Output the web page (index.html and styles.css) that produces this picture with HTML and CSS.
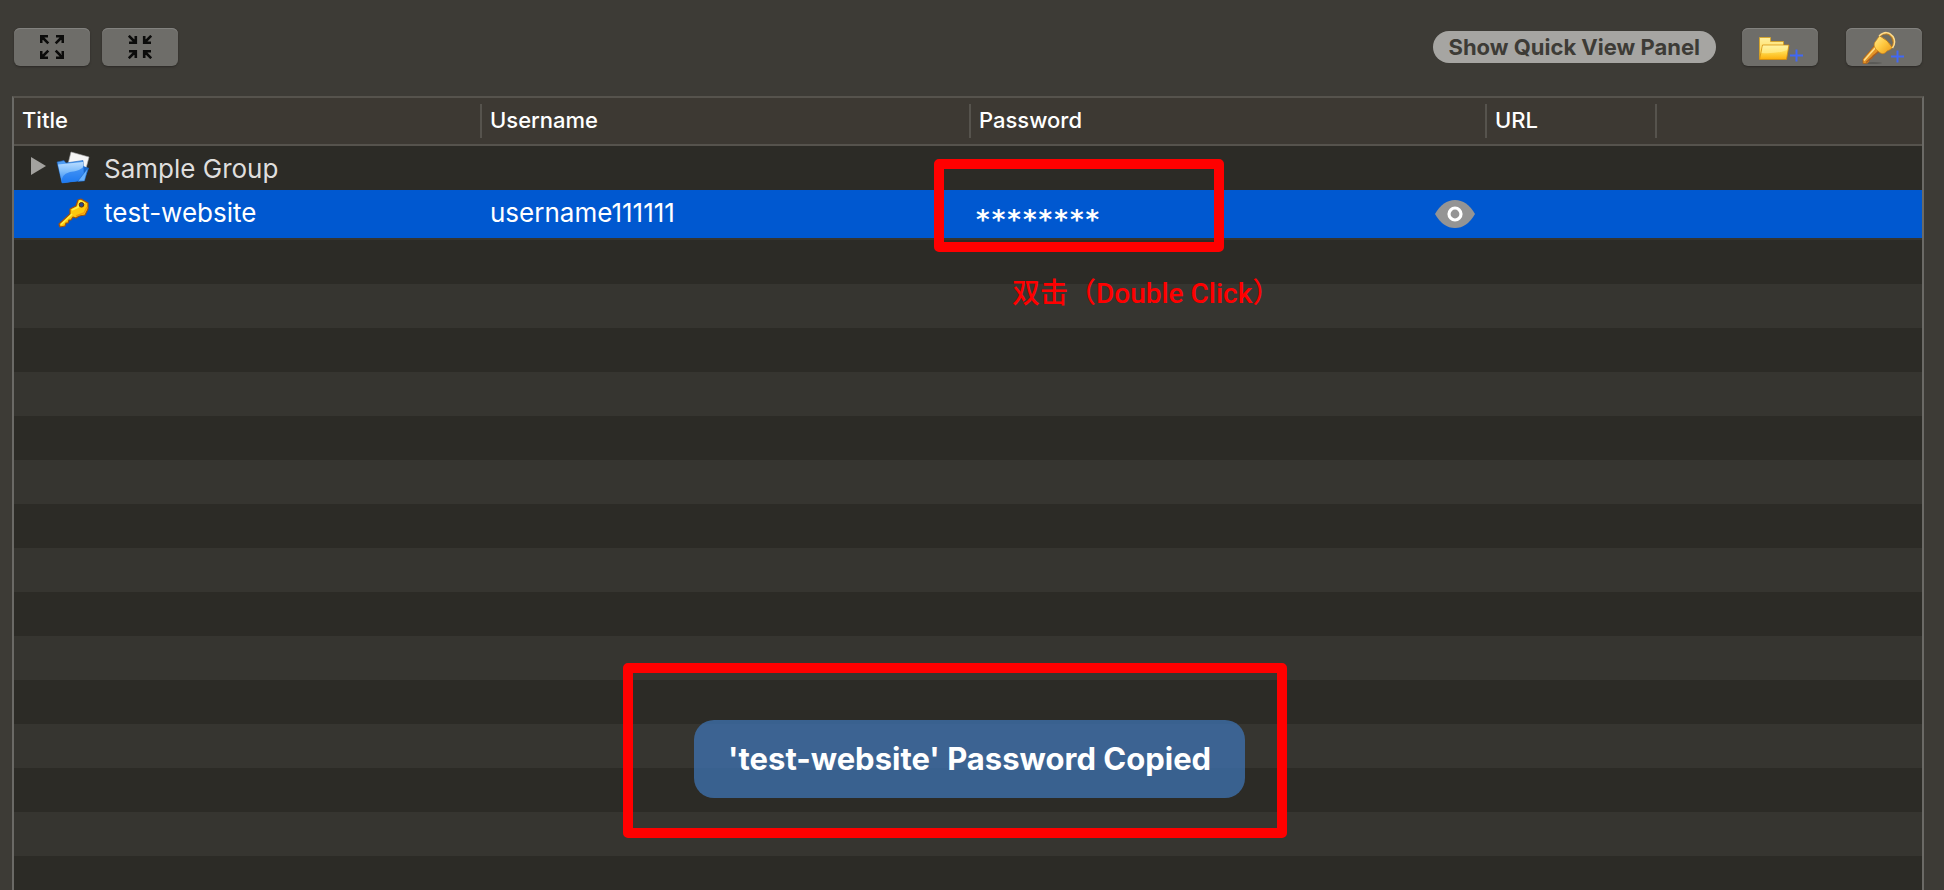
FILE: index.html
```html
<!DOCTYPE html>
<html lang="en">
<head>
<meta charset="utf-8">
<title>Password Database</title>
<link rel="stylesheet" href="styles.css">
</head>
<body>
<header class="toolbar">
  <button class="tool" type="button" aria-label="Expand all">
    <svg class="icon-arrows" viewBox="0 0 24 24" aria-hidden="true">
      <path d="M1.2 8V1.2H8M1.5 1.5L8.300 8.300M16 1.200H22.800V8M22.500 1.500L15.700 8.300M1.200 16V22.800H8M1.500 22.500L8.300 15.700M22.800 16V22.800H16M22.500 22.500L15.700 15.700"/>
    </svg>
  </button>
  <button class="tool" type="button" aria-label="Collapse all">
    <svg class="icon-arrows" viewBox="0 0 24 24" aria-hidden="true">
      <path d="M7.800 1V7.800H1M7.500 7.500L.8 .8M16.200 1V7.800H23M16.500 7.500L23.200 .8M1 16.200H7.800V23M7.500 16.500L.8 23.200M23 16.200H16.200V23M16.500 16.500L23.200 23.200"/>
    </svg>
  </button>
  <button class="pill" type="button">Show Quick View Panel</button>
  <button class="tool tool-group" type="button" aria-label="Add group">
    <svg class="icon-add" viewBox="0 0 76 38" aria-hidden="true">
      <defs>
        <linearGradient id="fy" x1="0" y1="0" x2="0" y2="1"><stop offset="0" stop-color="#fff0a0"/><stop offset="1" stop-color="#ffd23c"/></linearGradient>
        <linearGradient id="fz" x1="0" y1="0" x2="0" y2="1"><stop offset="0" stop-color="#fff29a"/><stop offset=".45" stop-color="#ffdc50"/><stop offset="1" stop-color="#fcae0a"/></linearGradient>
      </defs>
      <path d="M17.500 9.500H28.500V13.500H41.500V31H17.500Z" fill="url(#fy)" stroke="#dba21c" stroke-width=".8"/>
      <path d="M20.500 17H47L44.500 31.500H17.500Z" fill="url(#fz)" stroke="#d38d0c" stroke-width=".8"/>
      <path d="M20.800 17.800H46L45 22Q35 26 19.500 25Z" fill="#fff6b0" opacity=".5"/>
      <path d="M54.500 21.500V33.500M48 27.500H61" stroke="#4168f5" stroke-width="2"/>
    </svg>
  </button>
  <button class="tool" type="button" aria-label="Add entry">
    <svg class="icon-add" viewBox="0 0 76 38" aria-hidden="true">
      <defs><linearGradient id="kg" x1="0" y1="0" x2="1" y2="1"><stop offset="0" stop-color="#fff0a0"/><stop offset=".5" stop-color="#ffc940"/><stop offset="1" stop-color="#e69213"/></linearGradient></defs>
      <ellipse cx="27" cy="35" rx="9" ry=".8" fill="#3c3c39" opacity=".5"/>
      <path d="M29 17L17 31V35.500H21L23 33.500V31.500L26 30.500L27 27.500L30 26L36 21Z" fill="#e39427" stroke="#a9621a" stroke-width=".8"/>
      <path d="M30 19L18 32.500" stroke="#ffe08a" stroke-width="1.600"/>
      <path d="M34 22L20 34.500" stroke="#ab5e20" stroke-width="1.200"/>
      <path d="M29 14C32 11 33 6 39 5C45 5 48 10 48 15C48 20 44 22 41 23C38 27 35 26 32 23C29 21 27 17 29 14Z" fill="url(#kg)" stroke="#c98018" stroke-width=".7"/>
      <path d="M34 8Q42 3 46 10Q48.500 15 46 19Q42 12 34 8Z" fill="#6d6b61" stroke="#b87a22" stroke-width="1"/>
      <path d="M33 8Q41 1 47 8.500Q50.500 14.500 46.500 20" fill="none" stroke="#ffdc8c" stroke-width="1.500"/>
      <path d="M51.500 22.500V34.500M45 28.500H58" stroke="#4168f5" stroke-width="2"/>
    </svg>
  </button>
</header>

<main class="panel">
  <table class="entries">
    <colgroup><col class="col-title"><col class="col-user"><col class="col-pass"><col class="col-url"><col></colgroup>
    <thead>
      <tr>
        <th scope="col"><span class="head">Title</span></th>
        <th scope="col"><span class="head">Username</span></th>
        <th scope="col"><span class="head">Password</span></th>
        <th scope="col"><span class="head">URL</span></th>
        <td></td>
      </tr>
    </thead>
    <tbody>
      <tr class="group">
        <td>
          <div class="title">
            <button class="disclosure" type="button" aria-label="Expand Sample Group">
              <svg viewBox="0 0 16 20" aria-hidden="true"><path d="M1 1L16 10L1 19Z" fill="#a3a29f"/></svg>
            </button>
            <svg class="icon-row" viewBox="0 0 34 34" aria-hidden="true">
              <defs>
                <linearGradient id="fb" x1="0" y1="0" x2="0" y2="1"><stop offset="0" stop-color="#b9dcff"/><stop offset=".45" stop-color="#7dbcfb"/><stop offset="1" stop-color="#2c83f0"/></linearGradient>
              </defs>
              <path d="M15 1L33 6L28 25L10 21Z" fill="#f5f5f5" stroke="#aaa" stroke-width=".6"/>
              <path d="M24 14L33 17L28 30L22 31Z" fill="#1767c9"/>
              <path d="M1 11L8 9.500L10 12L27 9.500L28 29L6 32Z" fill="#4d9bf2" stroke="#1c62b8" stroke-width=".6"/>
              <path d="M2 13.500L27 11L28 29.500L6 32Z" fill="url(#fb)"/>
              <path d="M6 32Q4 24 14 21Q25 20 28 15V29.500Z" fill="#1673f0" opacity=".65"/>
              <path d="M22 30L32 17L28.500 30Z" fill="#69b3ff" stroke="#1c62b8" stroke-width=".5"/>
            </svg>
            <span>Sample Group</span>
          </div>
        </td>
        <td></td><td></td><td></td><td></td>
      </tr>
      <tr class="selected" aria-selected="true">
        <td>
          <div class="title">
            <span class="disclosure"></span>
            <svg class="icon-row" viewBox="0 0 34 34" aria-hidden="true">
              <path d="M14 12L20 9L22 3L25 2L32 6V12L29 18L23 19L20 21L17 20L15 23L13 23L12 26L10 26L9 29L4 30L3 27L14 17Z" fill="#ffc90d" stroke="#a2500c" stroke-width="1.200" stroke-linejoin="round"/>
              <path d="M16 13L22 10L24 4L29 6.500" fill="none" stroke="#fff04a" stroke-width="1.800"/>
              <path d="M5 27.500L16 17" stroke="#fff04a" stroke-width="1.600"/>
              <path d="M20 19L28 16L31 10" fill="none" stroke="#f39a0c" stroke-width="1.500"/>
              <circle cx="25.500" cy="7.800" r="2.300" fill="#274a8c" stroke="#5b2a10" stroke-width="1"/>
            </svg>
            <span class="entry-text">test-website</span>
          </div>
        </td>
        <td><div class="entry-text">username111111</div></td>
        <td class="secret">
          <div class="secret-row">
            <span class="stars">********</span>
            <button class="reveal" type="button" aria-label="Reveal password">
              <svg viewBox="0 0 40 28" aria-hidden="true"><path d="M0 14Q8 0 20 0T40 14Q32 28 20 28T0 14Z" fill="#949494"/><circle cx="20" cy="14" r="6" fill="none" stroke="#fff" stroke-width="3.200"/></svg>
            </button>
          </div>
          <div class="mark mark-password"></div>
          <div class="note" lang="zh-Hant">双击（Double Click）</div>
        </td>
        <td></td><td></td>
      </tr>
    </tbody>
  </table>
  <div class="mark mark-toast">
    <div class="toast" role="status">'test-website' Password Copied</div>
  </div>
</main>
</body>
</html>
```
FILE: styles.css
```css
* { box-sizing: border-box; }

body {
  margin: 0;
  min-height: 100vh;
  display: flex;
  flex-direction: column;
  background: #3d3b36;
  color: #dfdedd;
  font-family: Inter, "Noto Sans CJK SC", sans-serif;
  font-size: 26px;
}

button {
  margin: 0;
  padding: 0;
  border: 0;
  background: none;
  font: inherit;
  color: inherit;
}

svg { display: block; }

.toolbar {
  display: flex;
  align-items: center;
  gap: 12px;
  padding: 28px 22px 30px 14px;
}

.tool {
  width: 76px;
  height: 38px;
  display: grid;
  place-items: center;
  border-radius: 6px;
  background: #6e6d69;
  box-shadow: inset 0 1px #83827f, 0 1px 2px #2b2926;
}

.tool-group { margin: 0 16px 0 14px; }

.icon-arrows {
  width: 24px;
  height: 24px;
  fill: none;
  stroke: #0c0c0b;
  stroke-width: 2.6;
}

.icon-add { width: 76px; height: 38px; }

.pill {
  height: 32px;
  margin-left: auto;
  padding: 0 16px;
  border-radius: 16px;
  background: #a6a5a2;
  color: #3d3b36;
  font-size: 22px;
  font-weight: 700;
  line-height: 32px;
  white-space: nowrap;
}

.panel {
  position: relative;
  flex: 1;
  margin: 0 20px 0 12px;
  border: 2px solid #6b6a66;
  border-top-color: #56534d;
  border-bottom: 0;
  background: repeating-linear-gradient(#363530 0 44px, #2c2b26 44px 88px) 0 10px;
}

.entries {
  width: 100%;
  table-layout: fixed;
  border-collapse: separate;
  border-spacing: 0;
}

.col-title { width: 468px; }
.col-user { width: 489px; }
.col-pass { width: 516px; }
.col-url { width: 170px; }

.entries th,
.entries td {
  padding: 0 8px;
  text-align: left;
  vertical-align: middle;
  white-space: nowrap;
}

.entries thead th,
.entries thead td {
  height: 48px;
  background: #3d3933;
  border-bottom: 2px solid #56534d;
}

.entries thead th { padding-right: 0; }

.head {
  display: block;
  padding-bottom: 2px;
  border-right: 2px solid #56534d;
  color: #fff;
  font-size: 22px;
  font-weight: 500;
  line-height: 32px;
}

.group td { height: 44px; background: #2c2b26; }

.selected td {
  height: 48px;
  background: #0058d0;
  color: #fff;
}

.title {
  display: flex;
  align-items: center;
  padding-left: 8px;
}

.entry-text { padding-bottom: 3px; }

.disclosure { width: 26px; }
.disclosure svg { width: 16px; height: 20px; margin-bottom: 4px; }
.icon-row { width: 34px; height: 34px; margin-right: 14px; }

.selected .secret { position: relative; padding: 0 12px 0 4px; }

.secret-row {
  display: flex;
  align-items: center;
  justify-content: space-between;
}

.stars {
  padding-top: 12px;
  font-family: "DejaVu Sans Mono", monospace;
  font-size: 26px;
  font-weight: 700;
  line-height: 32px;
}

.reveal svg { width: 40px; height: 28px; }

.mark {
  position: absolute;
  border: 10px solid #f00;
  border-radius: 5px;
}

.mark-password {
  top: -31px;
  left: -37px;
  width: 290px;
  height: 93px;
}

.note {
  position: absolute;
  top: 84px;
  left: 41px;
  color: #f00;
  font-family: Roboto, "Noto Sans CJK TC", sans-serif;
  font-size: 28px;
  font-weight: 500;
  line-height: 40px;
}

.mark-toast {
  bottom: 52px;
  left: 50%;
  margin-left: -345px;
  padding: 47px 32px 30px 61px;
}

.toast {
  padding: 0 34px;
  border-radius: 20px;
  background: rgba(62, 118, 184, .72);
  color: #fff;
  font-size: 31px;
  font-weight: 700;
  line-height: 78px;
  white-space: nowrap;
}
```
